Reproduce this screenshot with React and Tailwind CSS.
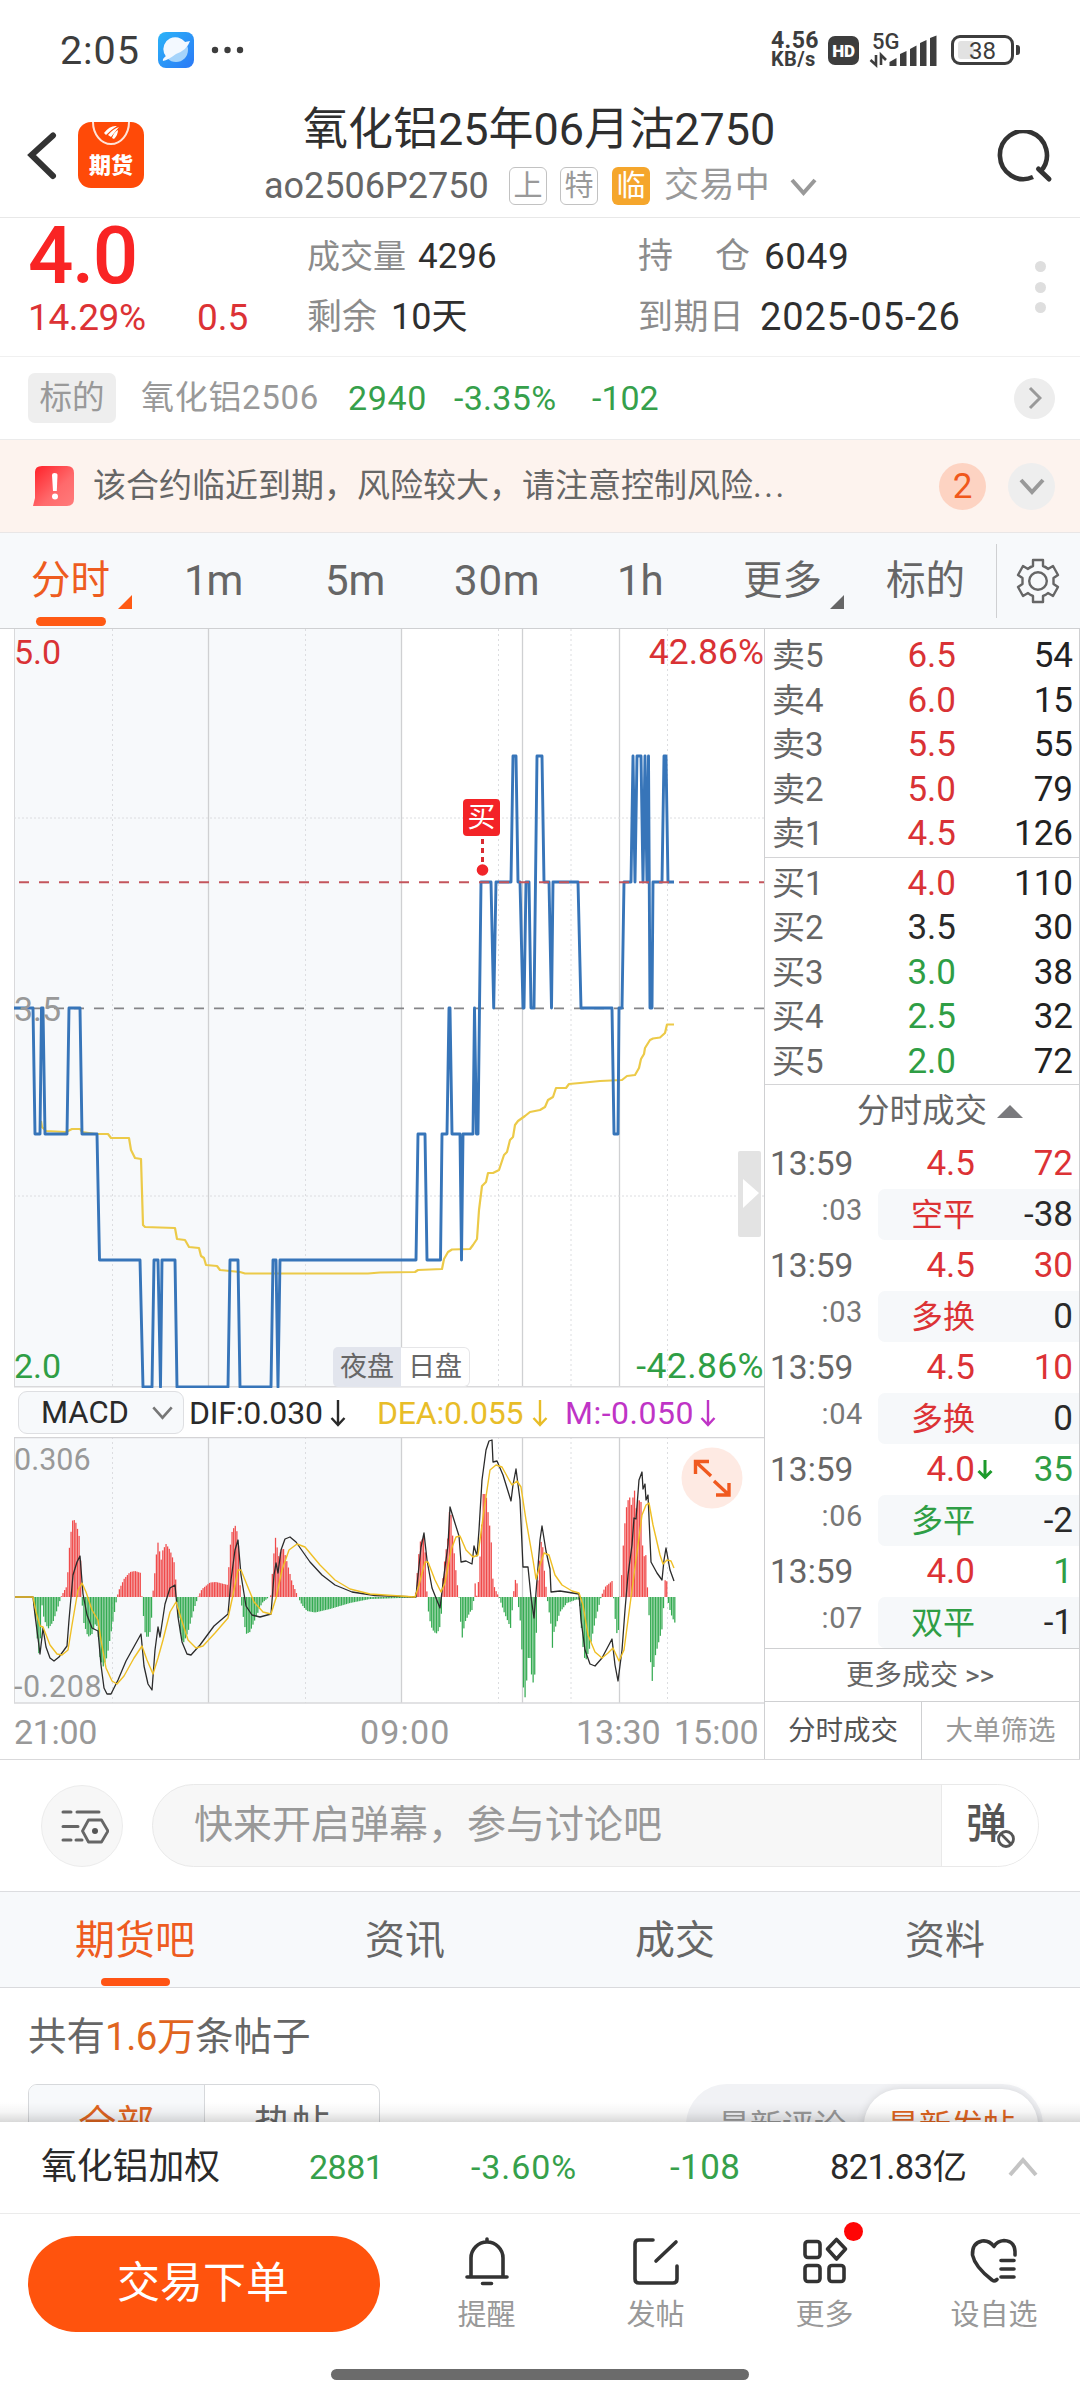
import React from "react";

const PRICE_LINE =
  "14,1008 33,1008 35,1134 40,1134 41.5,1008 43,1008 45,1134 67,1134 69,1008 80,1008 82,1134 97,1134 99.5,1260 140,1260 143,1387 152,1387 154,1260 158,1260 160.5,1387 162,1260 175,1260 177,1387 228,1387 230,1260 238,1260 240,1387 271,1387 273,1260 276,1260 278,1387 280,1260 416,1260 418,1134 425,1134 427,1260 440.5,1260 442,1134 447,1134 449,1008 450,1008 452,1134 460,1134 461.5,1260 463,1134 473,1134 474.5,1008 476.5,1134 478,1134 481,882 491,882 493.7,1008 496,882 511,882 513,756 516,756 518,882 520,882 523,1008 524,1008 526,882 529,882 531,1008 534,1008 537,756 542,756 544,882 549,882 551.5,1008 553,882 578,882 581,1008 612,1008 614,1134 618,1134 619,1008 622,1008 624,882 631,882 633,756 635,882 637,756 641,756 643,882 645,756 647,882 648.5,756 650,1008 652,1008 653,882 662,882 664,756 666,756 668,882 674,882";

const AVG_LINE =
  "41,1121 42,1127 46,1131 66,1132 72,1129 80,1129 82,1132 96,1134 108,1134 111,1138 129,1138 131,1150 135,1158 141,1159 143,1225 145,1227 175,1228 177,1239 185,1240 189,1247 199,1248 201,1256 204,1258 206,1265 217,1266 220,1270 240,1272 245,1273.5 368,1273.5 380,1272.5 415,1272 418,1270 442,1269 444,1259 448,1252 452,1249.5 470,1249 473,1245 477,1239 479,1210 482,1186 486,1182 488,1173 493,1173 499,1170 504,1155 507,1152 510,1140 513,1137 515,1125 518,1121 525,1116 530,1112 540,1110 545,1107 548,1100 553,1097 556,1088 566,1088 569,1084 580,1083 600,1081 622,1080 627,1076 635,1075 639,1068 641,1059 644,1054 645,1048 650,1040 653,1038.5 660,1037.5 665,1033 667,1024.5 674,1024.5";

const DIF_LINE =
  "15,1597 33,1597 35,1615 40,1654 43,1628 46,1647 50,1658 54,1661 59,1657 67,1646 69,1620 73,1575 77,1562 80,1556 83,1594 87,1615 92,1628 98,1631 101,1665 104,1688 107,1694 111,1694 113,1690 118,1680 126,1661 141,1634 144,1666 148,1684 152,1690 155,1650 158,1627 160,1637 165,1604 170,1588 175,1585 178,1617 182,1642 187,1654 191,1655 200,1645 214,1626 228,1614 231,1580 235,1550 238,1540 241,1575 246,1606 252,1615 260,1617 271,1614 274,1575 276,1563 278,1573 281,1550 285,1539 290,1537 296,1542 310,1562 322,1575 335,1585 352,1592 375,1595.5 416,1597 417,1585 421,1547 424,1533 427,1560 432,1588 440,1608 444,1575 448,1545 450,1507 454,1520 459,1536 461,1562 466,1561 472,1564 474,1546 477,1556 479,1530 482,1480 486,1450 489,1441 492,1440 493,1462 497,1461 503,1475 511,1501 513,1485 516,1469 520,1500 523,1567 528,1567 531,1597 534,1618 537,1580 540,1540 542,1526 546,1551 550,1569 551,1592 560,1591 579,1594 581,1620 585,1650 590,1664 595,1666 602,1658 612,1639 615,1665 618,1681 622,1650 625,1610 628,1575 632,1545 634,1518 636,1519 639,1480 642,1472 643,1489 645,1484 646,1500 648,1495 651,1562 657,1573 662,1580 664,1560 666,1548 670,1570 674,1581";

const DEA_LINE =
  "15,1597 33,1597 36,1612 40,1626 43,1627 50,1645 57,1654 62,1655 68,1650 72,1625 78,1590 82,1583 86,1592 92,1610 98,1620 101,1640 106,1668 112,1681 117,1684 124,1676 134,1658 142,1646 147,1660 153,1674 158,1658 163,1640 170,1612 176,1602 181,1618 188,1640 196,1648 203,1646 215,1633 228,1618 233,1595 238,1570 241,1570 247,1585 254,1602 263,1612 271,1614 276,1598 282,1570 289,1550 297,1544 305,1547 320,1565 335,1580 350,1589 370,1594 415,1597 419,1585 425,1562 428,1562 435,1580 441,1592 445,1583 451,1550 456,1537 460,1536 466,1550 473,1557 478,1555 484,1510 490,1470 496,1465 502,1467 508,1478 512,1485 517,1481 521,1487 526,1520 533,1560 536,1579 540,1565 544,1553 549,1555 555,1575 562,1585 572,1591 579,1593 583,1605 588,1635 595,1652 602,1658 608,1653 613,1648 619,1661 624,1650 630,1605 636,1560 642,1515 646,1505 649,1503 653,1525 660,1555 663,1564 667,1560 671,1561 674,1568";

const HIST = [
  [33, 0], [36, -25], [38, -52], [40, -62], [41, -15], [42, -8], [44, -22], [48, -32], [53, -25], [58, -10], [61, 0], [64, 6], [67, 11], [69, 45], [71, 65], [73, 79], [76, 74], [79, 62], [80.5, 45], [81.5, 0], [84, -27], [88, -40], [92, -37], [96, -25], [98, -35], [100, -60], [103, -70], [107, -60], [110, -42], [114, -18], [117, 0], [119, 7], [124, 18], [130, 25], [135, 26], [141, 24], [141.9, 0], [143, -14], [145, -35], [147.5, -42], [151, -32], [152.5, 0], [154, 15], [157, 50], [159, 59], [160.3, 29], [162, 45], [166, 53], [170, 47], [175, 32], [176.5, 0], [178, -10], [180, -35], [183, -47], [188, -35], [194, -12], [198, 0], [202, 8], [210, 14.5], [216, 15], [228, 12], [229.5, 45], [232, 65], [235, 72], [238, 62], [239.5, 28], [240.5, 0], [243, -18], [246, -37], [250, -35], [256, -20], [262, -6], [269, 0], [271, 2], [273, 35], [276, 64], [278, 38], [279, 42], [283, 50], [287, 35], [292, 15], [298, 0], [302, -8], [307, -14], [315, -15.5], [330, -12], [350, -6], [370, -2], [400, -1], [415, -0.6], [416, 8], [418, 35], [420, 55], [424, 60], [426, 35], [427, 0], [429, -20], [432, -32], [436, -37], [439, -33], [441, -25], [442, 0], [443, 20], [445, 40], [448, 60], [450, 96], [452, 68], [455, 35], [457, 15], [459, 0], [461, -30], [462, -42], [465, -25], [470, -15], [473, -12], [473.8, 0], [474.5, 20], [476, 5], [477, 0], [479, 22], [481, 60], [483, 103], [486, 103], [488, 85], [491, 60], [493, 15], [495, 8], [499, 0], [504, -15], [511, -32], [513, 0], [515, 15], [516.5, 23], [518, -5], [521, -30], [523, -84], [524.5, -106], [527, -80], [529, -50], [531, -75], [534, -90], [536, -55], [537, 5], [539, 30], [542, 65], [543.5, 35], [546, 10], [547, 0], [551, -28], [552, -55], [554, -35], [560, -15], [567, -6], [578, -2], [580, -10], [582, -40], [584, -60], [586, -63], [590, -50], [595, -25], [601, 0], [605, 10], [612, 16], [613.5, 0], [616, -32], [618, -42], [620, 0], [621, 10], [624, 65], [627, 95], [630, 100], [632, 88], [634, 113], [636, 88], [638, 98], [641, 95], [643, 40], [646, 42], [647, 8], [648.5, 14], [649.5, -48], [652, -86], [655, -60], [660, -40], [663, -28], [664, 5], [666, 26], [667.5, 5], [668.5, -8], [672, -20], [675, -26],
];

function buildBars() {
  const bars = [];
  let k = 0;
  for (let x = 34; x <= 675; x += 1.61) {
    while (k < HIST.length - 2 && HIST[k + 1][0] < x) k += 1;
    const [x0, h0] = HIST[k];
    const [x1, h1] = HIST[k + 1];
    const h = h0 + ((h1 - h0) * (x - x0)) / (x1 - x0);
    if (Math.abs(h) > 0.4) bars.push([x, h]);
  }
  return bars;
}
const BARS = buildBars();

const SOLID_X = [208.5, 401.5, 522.5, 619.5];
const DOTTED_X = [112.5, 305.5, 498.5, 571, 667.5];

function ChartGrid({ top, bottom }) {
  return (
    <g>
      <rect x="14" y={top} width="387" height={bottom - top} fill="#f7f9fb" />
      {DOTTED_X.map((x) => (
        <line key={x} x1={x} x2={x} y1={top} y2={bottom} stroke="#dcdde0" strokeWidth="1" strokeDasharray="2 3" />
      ))}
      {SOLID_X.map((x) => (
        <line key={x} x1={x} x2={x} y1={top} y2={bottom} stroke="#cfd0d2" strokeWidth="1.3" />
      ))}
      <line x1="14.5" x2="14.5" y1={top} y2={bottom} stroke="#d9d9db" strokeWidth="1" />
    </g>
  );
}

function PriceChart() {
  return (
    <svg className="block" width="764" height="759" viewBox="0 629 764 759">
      <ChartGrid top={629} bottom={1387} />
      <line x1="14" x2="764" y1="818" y2="818" stroke="#dcdde0" strokeWidth="1" strokeDasharray="2 2" />
      <line x1="14" x2="764" y1="1196" y2="1196" stroke="#dcdde0" strokeWidth="1" strokeDasharray="2 2" />
      <line x1="14" x2="764" y1="1386.7" y2="1386.7" stroke="#d9d9db" strokeWidth="1.6" />
      <line x1="14" x2="764" y1="1008.3" y2="1008.3" stroke="#858588" strokeWidth="1.8" strokeDasharray="10 10" />
      <polyline points={AVG_LINE} fill="none" stroke="#ecca48" strokeWidth="2.2" strokeLinejoin="round" />
      <polyline points={PRICE_LINE} fill="none" stroke="#3775b9" strokeWidth="2.9" strokeLinejoin="round" />
      <line x1="19" x2="764" y1="882.2" y2="882.2" stroke="#c4555c" strokeWidth="2" strokeDasharray="10 10" />
      <line x1="482.5" x2="482.5" y1="839" y2="866" stroke="#d92b31" strokeWidth="3" strokeDasharray="5 4" />
      <circle cx="482.5" cy="870" r="5.8" fill="#f02429" />
      <rect x="738" y="1151" width="23" height="86" rx="2" fill="#e3e3e3" />
      <path d="M743 1179 L759 1193 L743 1208 Z" fill="#fff" />
    </svg>
  );
}

function MacdChart() {
  return (
    <svg className="block" width="764" height="267" viewBox="0 1437 764 267">
      <ChartGrid top={1437} bottom={1703} />
      <line x1="14" x2="764" y1="1437.5" y2="1437.5" stroke="#d4d4d6" strokeWidth="1.4" />
      <line x1="14" x2="764" y1="1703" y2="1703" stroke="#d9d9db" strokeWidth="1.6" />
      {BARS.map(([x, h]) => (
        <rect key={x} x={x - 0.6} y={h > 0 ? 1597 - h : 1597} width="1.25" height={Math.abs(h)} fill={h > 0 ? "#f04a4a" : "#35ab52"} />
      ))}
      <polyline points={DIF_LINE} fill="none" stroke="#2b2b2b" strokeWidth="1.3" strokeLinejoin="round" />
      <polyline points={DEA_LINE} fill="none" stroke="#efbf24" strokeWidth="1.4" strokeLinejoin="round" />
      <circle cx="712" cy="1478" r="30.5" fill="#feeae3" />
      <g fill="none" stroke="#f0591f" strokeWidth="3.4">
        <path d="M695.5 1474 V1461.5 H709 M696 1462 L711 1476" />
        <path d="M729 1483 V1495 H716 M729 1495 L714 1481" />
      </g>
    </svg>
  );
}

function Chevron({ w, h, color, sw, className = "", dir = "down" }) {
  const p = sw / 2;
  const d = dir === "down" ? `M${p} ${p} L${w / 2} ${h - p} L${w - p} ${p}` : `M${p} ${h - p} L${w / 2} ${p} L${w - p} ${h - p}`;
  return (
    <svg className={"block shrink-0 overflow-visible " + className} width={w} height={h} viewBox={`0 0 ${w} ${h}`}>
      <path d={d} fill="none" stroke={color} strokeWidth={sw} />
    </svg>
  );
}

function ArrowDown({ color, className = "" }) {
  return (
    <svg className={"block shrink-0 " + className} width="16" height="28" viewBox="0 0 16 28">
      <path d="M8 1 V26 M1.5 19 L8 26 L14.5 19" fill="none" stroke={color} strokeWidth="2.4" />
    </svg>
  );
}

function StatusBar() {
  return (
    <div className="flex h-[90px] shrink-0 pt-[8px] text-[#3d3d3d]">
      <div className="ml-[60px] flex h-[84px] items-center">
        <span className="w-[98px] pt-[1px] text-[39.500px] leading-[84px] tracking-[0.9px]">2:05</span>
        <svg width="36" height="36" viewBox="0 0 36 36">
          <defs>
            <linearGradient id="planetBg" x1="0" y1="0" x2="1" y2="1">
              <stop offset="0" stopColor="#2bb4f8" />
              <stop offset="1" stopColor="#2b78f6" />
            </linearGradient>
          </defs>
          <rect width="36" height="36" rx="8" fill="url(#planetBg)" />
          <circle cx="18" cy="18" r="12" fill="#a5d4fb" />
          <path d="M6 21 A12 12 0 0 1 27 10 L32 9 Q29 18 18 22 Q10 28 5 29 Q4 27 8 24 Z" fill="#f3f9ff" />
        </svg>
        <svg className="ml-[17px]" width="34" height="8" viewBox="0 0 34 8">
          <circle cx="4" cy="4" r="3.2" fill="#3d3d3d" />
          <circle cx="16.5" cy="4" r="3.2" fill="#3d3d3d" />
          <circle cx="29" cy="4" r="3.2" fill="#3d3d3d" />
        </svg>
      </div>
      <div className="ml-auto mr-[60px] flex h-[84px] items-center">
        <div className="w-[57px] font-bold">
          <div className="text-[23px] leading-[19px] tracking-[0.4px]">4.56</div>
          <div className="text-[20px] leading-[19px] tracking-[0.4px]">KB/s</div>
        </div>
        <div className="h-[29px] w-[31px] rounded-[7px] bg-[#3d3d3d] text-center text-[17px] font-black leading-[30px] tracking-[-0.3px] text-white">HD</div>
        <svg className="ml-[11px] overflow-visible" width="68" height="36" viewBox="870 32 68 36">
          <text x="872" y="49" fontSize="22" fontWeight="500" fill="#3d3d3d" fontFamily="Roboto">5G</text>
          <path d="M870.5 60 L876 65 V55 M881 65 V55 L886 60" fill="none" stroke="#3d3d3d" strokeWidth="2.6" />
          <path d="M889.500 66 V62 L896.500 58 V66 Z M900 66 V54 L906.500 51 V66 Z M910 66 V49 L916.500 45.500 V66 Z M920 66 V43 L926.500 40 V66 Z M930 66 V38 L936.500 35.500 V66 Z" fill="#3d3d3d" />
        </svg>
        <div className="relative ml-[13px] h-[30px] w-[63px] rounded-[9px] border-[3px] border-[#3d3d3d] text-center text-[24px] leading-[26px]">
          <div className="absolute left-[4px] top-[3px] h-[18px] w-[16px] rounded-[3px] bg-[#e2e2e2]" />
          <span className="relative">38</span>
        </div>
        <div className="ml-[2px] h-[10px] w-[4px] rounded-r-[3px] bg-[#3d3d3d]" />
      </div>
    </div>
  );
}

function Header() {
  return (
    <header className="flex h-[128px] shrink-0 border-b border-[#e8e8e8]">
      <svg className="ml-[26px] mt-[42px] shrink-0" width="32" height="48" viewBox="26 132 32 48">
        <path d="M53 135.500 L31.500 155 L53 176" fill="none" stroke="#333" strokeWidth="6" strokeLinecap="round" strokeLinejoin="miter" />
      </svg>
      <div className="relative ml-[20px] mt-[32px] h-[66px] w-[66px] shrink-0 overflow-hidden rounded-[13px] bg-[#ff4a08]">
        <svg width="66" height="66" viewBox="0 0 66 66">
          <path d="M15 0 A18 22 0 0 0 51 0" fill="none" stroke="#ffe3d8" strokeWidth="2" />
          <path d="M26 11 Q32 3 39 4 Q34 7 28 13 Z M30 13 Q35 7 41 5 Q36 11 33 15 Z M34 16 Q36 10 40 8 Q40 13 36 17 Z" fill="#fff" />
        </svg>
        <span className="absolute left-0 top-[31px] w-full text-center text-[22px] font-black leading-[26px] text-white">期货</span>
      </div>
      <div className="ml-[120px] w-[600px] shrink-0">
        <div className="ml-[39px] mt-[14px] whitespace-nowrap text-[45px] leading-[52px] text-[#2f2f2f]">氧化铝25年06月沽2750</div>
        <div className="mt-[7px] flex h-[46px] items-center whitespace-nowrap">
          <span className="w-[245px] text-[36px] leading-[46px] text-[#666]">ao2506P2750</span>
          <span className="h-[38px] w-[38px] rounded-[6px] border-[1.5px] border-[#c2c2c2] text-center text-[29px] leading-[36px] text-[#999]">上</span>
          <span className="ml-[13px] h-[38px] w-[38px] rounded-[6px] border-[1.5px] border-[#c2c2c2] text-center text-[29px] leading-[36px] text-[#999]">特</span>
          <span className="ml-[14px] h-[38px] w-[38px] rounded-[6px] bg-[#f5a62c] text-center text-[29px] leading-[38px] text-white">临</span>
          <span className="ml-[14px] w-[126px] text-[35px] leading-[46px] tracking-[0.4px] text-[#999]">交易中</span>
          <Chevron w={27} h={17} color="#999" sw={4} />
        </div>
      </div>
      <svg className="ml-[133px] mt-[40px] shrink-0" width="56" height="56" viewBox="996 130 56 56">
        <path d="M1032 177 A23.500 24 0 1 1 1040 171" fill="none" stroke="#333" strokeWidth="4.600" />
        <path d="M1037.500 169 L1048 179" fill="none" stroke="#333" strokeWidth="5" strokeLinecap="round" />
      </svg>
    </header>
  );
}

function Quote() {
  return (
    <section className="flex h-[139px] shrink-0 whitespace-nowrap border-b border-[#f0f0f0] text-[#2f2f2f]">
      <div className="ml-[28px] w-[279px] pt-[1px]">
        <div className="h-[74px] text-[80px] font-medium leading-[75px] tracking-[-1.5px] text-[#f92424]">4.0</div>
        <div className="flex text-[37px] leading-[50px] text-[#dc3235]">
          <span className="w-[169px] tracking-[-0.4px]">14.29%</span>
          <span>0.5</span>
        </div>
      </div>
      <div className="w-[331px]">
        <div className="mt-[9px] flex leading-[60px]">
          <span className="w-[111px] text-[33px] text-[#8c8c8c]">成交量</span>
          <span className="text-[35px]">4296</span>
        </div>
        <div className="flex leading-[61px]">
          <span className="w-[84px] text-[35px] text-[#8c8c8c]">剩余</span>
          <span className="text-[36px]">10天</span>
        </div>
      </div>
      <div className="w-[397px]">
        <div className="mt-[9px] flex leading-[60px]">
          <span className="w-[77px] text-[35px] text-[#8c8c8c]">持</span>
          <span className="w-[49px] text-[35px] text-[#8c8c8c]">仓</span>
          <span className="text-[37px] tracking-[0.5px]">6049</span>
        </div>
        <div className="flex leading-[61px]">
          <span className="w-[122px] text-[35px] tracking-[0.4px] text-[#8c8c8c]">到期日</span>
          <span className="text-[38px] tracking-[0.9px]">2025-05-26</span>
        </div>
      </div>
      <div className="mt-[43px] flex flex-col gap-[9.500px]">
        <i className="h-[11px] w-[11px] rounded-full bg-[#dedede]" />
        <i className="h-[11px] w-[11px] rounded-full bg-[#dedede]" />
        <i className="h-[11px] w-[11px] rounded-full bg-[#dedede]" />
      </div>
    </section>
  );
}

function Underlying() {
  return (
    <section className="flex h-[83px] shrink-0 items-center whitespace-nowrap border-b border-[#ebebeb] text-[34px] leading-[62px] text-[#36a04b]">
      <span className="ml-[28px] h-[50px] w-[88px] rounded-[7px] bg-[#eeeeee] text-center text-[32.500px] leading-[51px] text-[#999]">标的</span>
      <span className="ml-[25px] w-[207px] text-[33px] tracking-[0.7px] text-[#999]">氧化铝2506</span>
      <span className="w-[106px] tracking-[0.6px]">2940</span>
      <span className="w-[138px] tracking-[0.3px]">-3.35%</span>
      <span className="w-[422px]">-102</span>
      <span className="flex h-[41px] w-[41px] items-center justify-center rounded-full bg-[#ededed]">
        <svg width="14" height="24" viewBox="0 0 14 24"><path d="M2 2 L12 12 L2 22" fill="none" stroke="#999" strokeWidth="3" /></svg>
      </span>
    </section>
  );
}

function Notice() {
  return (
    <section className="flex h-[93px] shrink-0 items-center whitespace-nowrap border-b border-[#e9e6e6] bg-[#fdf3ee]">
      <svg className="ml-[33px] shrink-0" width="42" height="40" viewBox="0 0 42 40">
        <defs>
          <linearGradient id="warn" x1="0" y1="0" x2="1" y2="1">
            <stop offset="0" stopColor="#ff1f27" />
            <stop offset="0.6" stopColor="#ff6a6c" />
            <stop offset="1" stopColor="#ff7b7b" />
          </linearGradient>
        </defs>
        <path d="M2 6 Q2 0 9 0 H34 Q41 0 41 7 V33 Q41 40 34 40 H0 L2 32 Z" fill="url(#warn)" />
        <path d="M19 9 Q19 7 21.500 7 Q24.500 7 24.500 9 L23.800 25 H20 Z" fill="#fff" />
        <circle cx="22" cy="30.500" r="3" fill="#fff" />
      </svg>
      <span className="ml-[18px] w-[846px] text-[33px] leading-[60px] text-[#666]">
        该合约临近到期，风险较大，请注意控制风险<span className="tracking-[2.500px]">...</span>
      </span>
      <span className="h-[47px] w-[47px] rounded-full bg-[#fdd3c2] text-center text-[35px] leading-[48px] text-[#f0581c]">2</span>
      <span className="ml-[22px] flex h-[47px] w-[47px] items-center justify-center rounded-full bg-[#eeeeee]">
        <Chevron w={26} h={16} color="#999" sw={4} />
      </span>
    </section>
  );
}

function Corner({ color }) {
  return (
    <svg className="mt-[42px] shrink-0 self-center" width="14" height="14" viewBox="0 0 14 14">
      <path d="M14 0 V14 H0 Z" fill={color} />
    </svg>
  );
}

function PeriodTabs() {
  return (
    <nav className="flex h-[96px] shrink-0 items-center whitespace-nowrap border-b border-[#cfd0d2] bg-[#f7f9fb] text-[42px] leading-[96px] text-[#666]">
      <div className="relative ml-[31px] w-[87px] text-[39.500px] text-[#ee5c1f]">
        分时
        <i className="absolute bottom-[3px] left-[5px] h-[9px] w-[70px] rounded-full bg-[#ff5a14]" />
      </div>
      <Corner color="#ff5a14" />
      <span className="ml-[52px] w-[141px] tracking-[-1px]">1m</span>
      <span className="w-[129px]">5m</span>
      <span className="w-[163px] tracking-[0.8px]">30m</span>
      <span className="w-[126px]">1h</span>
      <span className="w-[87px] text-[39.500px]">更多</span>
      <Corner color="#666" />
      <span className="ml-[42px] w-[110px] text-[39.500px]">标的</span>
      <i className="h-[74px] w-px bg-[#cfd0d2]" />
      <svg className="ml-[19px] shrink-0" width="44" height="46" viewBox="-22 -23 44 46">
        <path
          d="M-5 -21 H5 V-15 Q8 -14 10 -12 L15 -15 L20 -6 L15.500 -3 V3 L20 6 L15 15 L10 12 Q8 14 5 15 V21 H-5 V15 Q-8 14 -10 12 L-15 15 L-20 6 L-15.500 3 V-3 L-20 -6 L-15 -15 L-10 -12 Q-8 -14 -5 -15 Z"
          fill="none" stroke="#666" strokeWidth="2.400" strokeLinejoin="round"
        />
        <circle r="8.800" fill="none" stroke="#666" strokeWidth="2.400" />
      </svg>
    </nav>
  );
}

const ASKS = [["卖5", "6.5", "54"], ["卖4", "6.0", "15"], ["卖3", "5.5", "55"], ["卖2", "5.0", "79"], ["卖1", "4.5", "126"]];
const BIDS = [
  ["买1", "4.0", "110", "text-[#d93235]"],
  ["买2", "3.5", "30", "text-[#2a2a2a]"],
  ["买3", "3.0", "38", "text-[#2f9e45]"],
  ["买4", "2.5", "32", "text-[#2f9e45]"],
  ["买5", "2.0", "72", "text-[#2f9e45]"],
];
const RED = "text-[#dc3235]";
const GREEN = "text-[#2f9e45]";
const TRADES = [
  [":03", "4.5", "72", RED, "空平", "-38", RED, false],
  [":03", "4.5", "30", RED, "多换", "0", RED, false],
  [":04", "4.5", "10", RED, "多换", "0", RED, false],
  [":06", "4.0", "35", GREEN, "多平", "-2", GREEN, true],
  [":07", "4.0", "1", GREEN, "双平", "-1", GREEN, false],
];

function BookRow({ label, price, qty, tone }) {
  return (
    <div className="flex h-[44.500px] items-center leading-[44px]">
      <span className="ml-[7px] w-[70px] text-[33px] text-[#666]">{label}</span>
      <span className={"w-[114px] text-right text-[35px] " + tone}>{price}</span>
      <span className="ml-auto mr-[6px] text-[35px] text-[#222]">{qty}</span>
    </div>
  );
}

function SidePanel() {
  return (
    <aside className="flex w-[316px] shrink-0 flex-col whitespace-nowrap border-x border-[#cfd0d2]">
      <div className="h-[229px] border-b border-[#d4d4d6] pt-[5px]">
        {ASKS.map(([l, p, q]) => <BookRow key={l} label={l} price={p} qty={q} tone="text-[#d93235]" />)}
      </div>
      <div className="h-[229px] border-b border-[#d4d4d6] pt-[4px]">
        {BIDS.map(([l, p, q, t]) => <BookRow key={l} label={l} price={p} qty={q} tone={t} />)}
      </div>
      <div className="flex h-[53px] items-center pl-[92px] text-[32.500px] leading-[55px] text-[#666]">
        分时成交
        <svg className="ml-[10px]" width="26" height="13" viewBox="0 0 26 13"><path d="M13 0 L26 13 H0 Z" fill="#7a7a7d" /></svg>
      </div>
      {TRADES.map(([sec, price, qty, qtyTone, kind, delta, kindTone, arrow], i) => (
        <div key={i} className="h-[102px] text-[35px]">
          <div className="flex h-[51px] items-center leading-[52px]">
            <span className="ml-[5px] w-[88px] text-[33.500px] text-[#666]">13:59</span>
            <span className="w-[117px] text-right text-[#dc3235]">{price}</span>
            {arrow && (
              <svg className="ml-[2px]" width="16" height="20" viewBox="0 0 16 20"><path d="M8 0 V17 M1.500 11 L8 17.500 L14.500 11" fill="none" stroke="#1c9a2c" strokeWidth="3" /></svg>
            )}
            <span className={"ml-auto mr-[6px] " + qtyTone}>{qty}</span>
          </div>
          <div className="flex h-[51px]">
            <span className="w-[98px] text-right text-[29px] leading-[42px] tracking-[0.6px] text-[#777]">{sec}</span>
            <div className="ml-auto flex w-[201px] items-center rounded-l-[7px] bg-[#f6f8fa] leading-[52px]">
              <span className={"ml-[33px] w-[70px] text-[32px] " + kindTone}>{kind}</span>
              <span className="ml-auto mr-[6px] text-[#2a2a2a]">{delta}</span>
            </div>
          </div>
        </div>
      ))}
      <div className="h-[54px] border-y border-[#cfd0d2] pl-[81px] text-[28px] leading-[54px] text-[#666]">更多成交 &gt;&gt;</div>
      <div className="flex flex-1 text-center text-[27.500px] leading-[58px]">
        <span className="w-[157px] border-r border-[#cfd0d2] text-[#555]">分时成交</span>
        <span className="flex-1 text-[#999]">大单筛选</span>
      </div>
    </aside>
  );
}

function ChartPanel() {
  return (
    <section className="flex h-[1131px] shrink-0 border-b border-[#d9d9db]">
      <div className="w-[764px] shrink-0 whitespace-nowrap">
        <div className="relative h-[759px]">
          <PriceChart />
          <span className="absolute left-[14px] top-[3px] text-[34px] leading-[40px] text-[#d93235]">5.0</span>
          <span className="absolute right-0 top-[3px] text-[35.500px] leading-[40px] text-[#d93235]">42.86%</span>
          <span className="absolute left-[14px] top-[360px] text-[34px] leading-[40px] text-[#999]">3.5</span>
          <span className="absolute left-[14px] top-[717px] text-[34px] leading-[40px] text-[#2f9e45]">2.0</span>
          <span className="absolute right-0 top-[717px] text-[35.500px] leading-[40px] tracking-[0.4px] text-[#2f9e45]">-42.86%</span>
          <span className="absolute left-[463px] top-[170px] h-[37px] w-[37px] rounded-[4px] bg-[#f32327] text-center text-[28px] leading-[37px] text-white">买</span>
          <div className="absolute left-[333px] top-[718px] flex h-[40px] text-center text-[27px] leading-[41px] text-[#666]">
            <span className="w-[68px] rounded-l-[5px] bg-[#e2e5ed]">夜盘</span>
            <span className="w-[69px] rounded-r-[6px] border border-l-0 border-[#e6e6e8] bg-white leading-[39px]">日盘</span>
          </div>
        </div>
        <div className="flex h-[49px] items-center text-[33px] leading-[48px] text-[#2a2a2a]">
          <div className="ml-[18px] flex h-[43px] w-[166px] items-center rounded-[9px] border border-[#dedfe2] bg-[#f7f9fb]">
            <span className="ml-[22px] w-[111px] text-[31px] leading-[42px]">MACD</span>
            <Chevron w={21} h={13} color="#777" sw={2.6} />
          </div>
          <span className="ml-[5px] w-[141px] text-[32px] tracking-[-0.2px]">DIF:0.030</span>
          <ArrowDown color="#2a2a2a" />
          <span className="ml-[31px] w-[155px] text-[32px] tracking-[-0.2px] text-[#e8bd28]">DEA:0.055</span>
          <ArrowDown color="#e8bd28" />
          <span className="ml-[17px] w-[135px] text-[32px] tracking-[0.5px] text-[#bf34c6]">M:-0.050</span>
          <ArrowDown color="#bf34c6" />
        </div>
        <div className="relative">
          <MacdChart />
          <span className="absolute left-[14px] top-[3px] text-[30.500px] leading-[40px] text-[#999]">0.306</span>
          <span className="absolute left-[14px] top-[230px] text-[30.500px] leading-[40px] tracking-[0.5px] text-[#999]">-0.208</span>
        </div>
        <div className="flex h-[56px] text-[34px] leading-[56px] text-[#999]">
          <span className="ml-[14px] w-[346px] tracking-[-0.3px]">21:00</span>
          <span className="w-[216px] tracking-[1.2px]">09:00</span>
          <span className="w-[98px]">13:30</span>
          <span>15:00</span>
        </div>
      </div>
      <SidePanel />
    </section>
  );
}

function CommentBar() {
  return (
    <section className="flex h-[132px] shrink-0 items-center border-b border-[#dcdde0]">
      <span className="ml-[41px] flex h-[82px] w-[82px] items-center justify-center rounded-full border border-[#ececec] bg-[#f7f7f7]">
        <svg className="ml-[3px]" width="50" height="36" viewBox="58 1808 50 36">
          <path d="M62 1812 H70 M76 1812 H98 M62 1826.500 H77 M62 1840 H70 M75 1840 H81" stroke="#666" strokeWidth="3" strokeLinecap="round" />
          <path d="M87.500 1820 H100.500 L107 1831 L100.500 1842 H87.500 L81.500 1831 Z" fill="none" stroke="#666" strokeWidth="2.800" strokeLinejoin="round" />
          <circle cx="94" cy="1831" r="3" fill="#555" />
        </svg>
      </span>
      <div className="ml-[29px] flex h-[83px] w-[887px] overflow-hidden rounded-full border border-[#e9e9e9] bg-[#f7f7f7]">
        <span className="ml-[41px] flex-1 text-[39px] leading-[81px] text-[#999]">快来开启弹幕，参与讨论吧</span>
        <div className="relative w-[97px] border-l border-[#e9e9e9] bg-white">
          <span className="absolute left-[24px] top-0 text-[41px] font-medium leading-[78px] text-[#555]">弹</span>
          <svg className="absolute left-[53px] top-[43px]" width="22" height="22" viewBox="0 0 20 20">
            <circle cx="10" cy="10" r="9.500" fill="#fff" />
            <circle cx="10" cy="10" r="6.800" fill="none" stroke="#555" strokeWidth="2.600" />
            <path d="M5.500 5.500 L14.500 14.500" stroke="#555" strokeWidth="2.400" />
          </svg>
        </div>
      </div>
    </section>
  );
}

function Forum() {
  return (
    <>
      <nav className="grid h-[96px] shrink-0 grid-cols-4 border-b border-[#d9dadd] bg-[#f7f9fb] text-center text-[40px] leading-[98px] text-[#666]">
        <span className="relative text-[#ee5c1f]">
          期货吧
          <i className="absolute bottom-[4px] left-[101px] h-[8px] w-[69px] rounded-full bg-[#ff5414]" />
        </span>
        <span>资讯</span>
        <span>成交</span>
        <span>资料</span>
      </nav>
      <section className="h-[134px] shrink-0 overflow-hidden">
        <div className="ml-[28px] h-[96px] text-[38.500px] leading-[97px] text-[#666]">
          共有<span className="tracking-[-0.5px] text-[#e0651f]">1.6万</span>条帖子
        </div>
        <div className="flex justify-between pl-[28px] pr-[37px]">
          <div className="flex h-[80px] w-[352px] overflow-hidden rounded-[9px] border border-[#d6d8db] text-center text-[38px] leading-[78px]">
            <span className="flex-1 border-r border-[#d6d8db] bg-[#f7f9fb] text-[#e0651f]">全部</span>
            <span className="flex-1 text-[#666]">热帖</span>
          </div>
          <div className="flex h-[82px] w-[357px] rounded-full bg-[#f1f2f5] p-[5px] text-[32px] leading-[74px]">
            <span className="w-[173px] pl-[27px] text-[#999]">最新评论</span>
            <span className="flex-1 rounded-full bg-white text-center text-[#e0651f] shadow-[0_0_8px_rgba(0,0,0,0.12)]">最新发帖</span>
          </div>
        </div>
      </section>
    </>
  );
}

function Tool({ label, width, children }) {
  return (
    <div className={"relative flex flex-col items-center " + width}>
      <svg className="mt-[21px] block" width="50" height="52" viewBox="-25 -26 50 52" fill="none" stroke="#333" strokeWidth="3.600" strokeLinecap="round" strokeLinejoin="round">
        {children}
      </svg>
      <span className="mt-[8px] text-[29px] leading-[40px] text-[#999]">{label}</span>
    </div>
  );
}

function BottomSheet() {
  return (
    <footer className="relative h-[278px] shrink-0 bg-white">
      <div className="absolute -top-[20px] left-0 h-[20px] w-full bg-[linear-gradient(to_top,rgba(0,0,0,0.15),rgba(0,0,0,0.04)_50%,transparent)]" />
      <div className="flex h-[92px] items-center whitespace-nowrap border-b border-[#ebebeb] text-[35px] leading-[91px] text-[#36a04b]">
        <span className="ml-[41px] w-[268px] text-[35.800px] text-[#2a2a2a]">氧化铝加权</span>
        <span className="w-[162px] text-[34px] tracking-[-0.5px]">2881</span>
        <span className="w-[199px] text-[34px] tracking-[0.9px]">-3.60%</span>
        <span className="w-[160px] tracking-[0.4px]">-108</span>
        <span className="w-[178px] text-[34.500px] tracking-[-0.6px] text-[#2a2a2a]">821.83亿</span>
        <Chevron w={30} h={19} color="#c4c4c4" sw={4} dir="up" />
      </div>
      <div className="flex h-[148px]">
        <button className="ml-[28px] mt-[22px] h-[96px] w-[352px] rounded-full bg-[#ff530d] pb-[2px] pr-[2px] text-[43px] leading-[94px] text-white">交易下单</button>
        <Tool label="提醒" width="ml-[22px] w-[169px]">
          <path d="M-16 16 V-3 A16 16 0 0 1 16 -3 V16 M-20 16 H20 M0 -20 V-22 M-4.500 22.500 H4.500" />
        </Tool>
        <Tool label="发帖" width="w-[169px]">
          <path d="M-3 -21 H-17 Q-21 -21 -21 -17 V18 Q-21 22 -17 22 H17 Q21 22 21 18 V5 M0 0 L20 -19" />
        </Tool>
        <Tool label="更多" width="w-[169px]">
          <rect x="-20" y="-19.500" width="15" height="16" rx="3" />
          <rect x="-20" y="4.500" width="15" height="16" rx="3" />
          <rect x="4" y="4.500" width="15" height="16" rx="3" />
          <path d="M11.500 -21.500 L20.500 -12 L11.500 -2 L2.500 -12 Z" />
        </Tool>
        <Tool label="设自选" width="w-[170px]">
          <path d="M21 -6 Q22 -20 10 -20.500 Q3 -20 0 -14.500 Q-5 -21 -12 -20 Q-22 -18 -21.500 -6 Q-19 6 -2 19 Q0 21 3 18.500 M7 -.5 H20 M7 8 H20 M7 16 H20" />
        </Tool>
        <i className="absolute left-[844px] top-[100px] h-[19px] w-[19px] rounded-full bg-[#ff0505]" />
      </div>
      <div className="mx-auto mt-[7px] h-[11px] w-[418px] rounded-full bg-[#6b6b6b]" />
    </footer>
  );
}

export default function App() {
  return (
    <main className="flex h-[2400px] w-[1080px] flex-col overflow-hidden bg-white font-['Roboto','Noto_Sans_CJK_SC',sans-serif]">
      <StatusBar />
      <Header />
      <Quote />
      <Underlying />
      <Notice />
      <PeriodTabs />
      <ChartPanel />
      <CommentBar />
      <Forum />
      <BottomSheet />
    </main>
  );
}
